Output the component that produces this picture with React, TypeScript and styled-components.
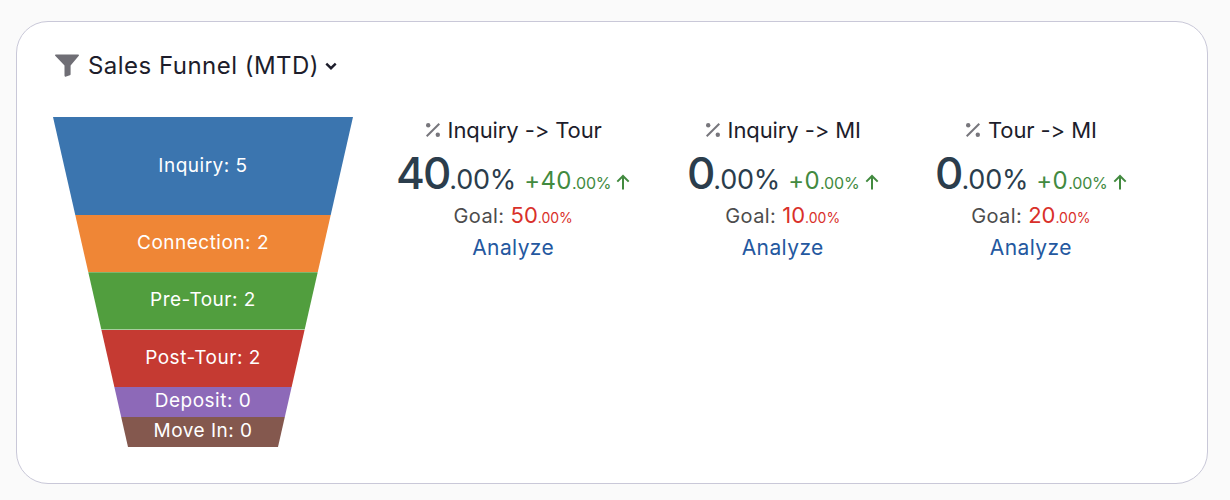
import React from "react";
import styled, { createGlobalStyle } from "styled-components";

const GlobalStyle = createGlobalStyle`
  html, body {
    margin: 0;
    padding: 0;
    background: #fafafa;
    font-family: "Inter", "Open Sans", sans-serif;
    font-variant-ligatures: none;
    font-feature-settings: "calt" 0, "liga" 0;
  }
`;

const FUNNEL_WIDTH = 300;
const FUNNEL_HEIGHT = 330;
const BOTTOM_WIDTH = 150;

const stages = [
  { label: "Inquiry: 5", height: 98, color: "#3b75af" },
  { label: "Connection: 2", height: 57.3, color: "#ef8636" },
  { label: "Pre-Tour: 2", height: 57.3, color: "#519e3e" },
  { label: "Post-Tour: 2", height: 57.4, color: "#c53a32" },
  { label: "Deposit: 0", height: 30, color: "#8d69b8" },
  { label: "Move In: 0", height: 30, color: "#84584e" },
];

const metrics = [
  { title: "Inquiry -> Tour", value: "40", delta: "+40", goal: "50" },
  { title: "Inquiry -> MI", value: "0", delta: "+0", goal: "10" },
  { title: "Tour -> MI", value: "0", delta: "+0", goal: "20" },
];

// inset of the funnel edge at a given distance from the top
const insetAt = (y: number) =>
  ((FUNNEL_WIDTH - BOTTOM_WIDTH) / 2) * (y / FUNNEL_HEIGHT);

function FilterIcon() {
  return (
    <TitleIcon viewBox="0 0 24 24" fill="#6f6e75">
      <path d="M0.8 1.5h22.4c.7 0 1 .8.6 1.3L15.6 12.6v8.6c0 .5-.3.9-.8 1.1l-3.6 1.3c-.8.3-1.7-.3-1.7-1.2v-9.8L.2 2.8c-.4-.5-.1-1.3.6-1.3z" />
    </TitleIcon>
  );
}

function ChevronIcon() {
  return (
    <Chevron viewBox="0 0 12 12" fill="none" stroke="#1d1d2b" strokeWidth="2.4">
      <path d="M1.3 3.6L6 8.2l4.7-4.6" />
    </Chevron>
  );
}

function PercentIcon() {
  return (
    <PercentSvg viewBox="0 0 16 16" fill="#77767c">
      <circle cx="3.2" cy="3.2" r="2.2" />
      <circle cx="12.8" cy="12.8" r="2.2" />
      <path d="M13.6 1l1.4 1.4L2.4 15 1 13.6z" />
    </PercentSvg>
  );
}

function ArrowUpIcon() {
  return (
    <ArrowSvg viewBox="0 0 14 16" fill="none" stroke="#428a3f" strokeWidth="2">
      <path d="M7 15.5V2M1.3 7.6L7 2l5.7 5.6" />
    </ArrowSvg>
  );
}

export default function App() {
  let offset = 0;

  return (
    <>
      <GlobalStyle />
      <Page>
        <Card>
          <Header>
            <FilterIcon />
            <Title>Sales Funnel (MTD)</Title>
            <ChevronIcon />
          </Header>
          <Body>
            <Funnel>
              {stages.map((stage) => {
                const top = insetAt(offset);
                const bottom = insetAt(offset + stage.height);
                offset += stage.height;
                return (
                  <Segment
                    key={stage.label}
                    $color={stage.color}
                    style={{
                      height: stage.height,
                      clipPath: `polygon(${top}px 0, ${FUNNEL_WIDTH - top}px 0, ${FUNNEL_WIDTH - bottom}px 100%, ${bottom}px 100%)`,
                    }}
                  >
                    {stage.label}
                  </Segment>
                );
              })}
            </Funnel>
            <Metrics>
              {metrics.map((metric) => (
                <Metric key={metric.title}>
                  <MetricTitle>
                    <PercentIcon />
                    {metric.title}
                  </MetricTitle>
                  <ValueRow>
                    <Value>
                      <ValueBig>{metric.value}</ValueBig>.00%
                    </Value>
                    <Delta>
                      <DeltaBig>{metric.delta}</DeltaBig>.00%
                      <ArrowUpIcon />
                    </Delta>
                  </ValueRow>
                  <Goal>
                    Goal:{" "}
                    <GoalValue>
                      <GoalBig>{metric.goal}</GoalBig>.00%
                    </GoalValue>
                  </Goal>
                  <AnalyzeLink>Analyze</AnalyzeLink>
                </Metric>
              ))}
            </Metrics>
          </Body>
        </Card>
      </Page>
    </>
  );
}

const Page = styled.div`
  width: 1230px;
  height: 500px;
  padding: 21px 22px 16px 16px;
  box-sizing: border-box;
`;

const Card = styled.div`
  height: 463px;
  box-sizing: border-box;
  padding: 28px 36px;
  background: #fff;
  border: 1px solid #c9c8d8;
  border-radius: 32px;
`;

const Header = styled.div`
  display: flex;
  align-items: center;
  height: 30px;
`;

const TitleIcon = styled.svg`
  width: 24px;
  height: 24px;
  margin-left: 2px;
  margin-right: 9px;
`;

const Title = styled.span`
  font-size: 24px;
  color: #1d1d2b;
  letter-spacing: 0.47px;
  white-space: nowrap;
`;

const Chevron = styled.svg`
  width: 12px;
  height: 12px;
  margin-left: 6px;
  margin-top: 2px;
`;

const Body = styled.div`
  display: flex;
  align-items: flex-start;
  margin-top: 37px;
`;

const Funnel = styled.div`
  display: flex;
  flex-direction: column;
  flex: none;
  width: ${FUNNEL_WIDTH}px;
`;

const Segment = styled.div<{ $color: string }>`
  display: flex;
  align-items: center;
  justify-content: center;
  padding-bottom: 2px;
  box-sizing: border-box;
  background: ${(p) => p.$color};
  color: #fff;
  font-size: 19px;
  letter-spacing: 0.5px;
  white-space: nowrap;
`;

const Metrics = styled.div`
  display: flex;
  gap: 56.5px;
  margin-left: 43px;
`;

const Metric = styled.div`
  display: flex;
  flex-direction: column;
  align-items: center;
`;

const MetricTitle = styled.div`
  display: flex;
  align-items: center;
  height: 26px;
  font-size: 22px;
  letter-spacing: -0.1px;
  color: #1d1d2b;
  white-space: nowrap;
`;

const PercentSvg = styled.svg`
  width: 16px;
  height: 16px;
  margin-right: 7px;
`;

const ValueRow = styled.div`
  display: flex;
  align-items: baseline;
  margin-top: 3px;
  white-space: nowrap;
`;

const Value = styled.span`
  font-size: 27px;
  letter-spacing: -0.2px;
  color: #2b3d4c;
`;

const ValueBig = styled.span`
  font-size: 44px;
  font-weight: 500;
  letter-spacing: -2px;
`;

const Delta = styled.span`
  margin-left: 8px;
  font-size: 16px;
  letter-spacing: -0.15px;
  color: #428a3f;
`;

const DeltaBig = styled.span`
  font-size: 24px;
  letter-spacing: 0.4px;
`;

const ArrowSvg = styled.svg`
  width: 14px;
  height: 16px;
  margin-left: 5px;
  vertical-align: -1px;
`;

const Goal = styled.div`
  margin-top: 2px;
  font-size: 20px;
  letter-spacing: 0.4px;
  line-height: 26px;
  color: #4c4c4c;
  white-space: nowrap;
`;

const GoalValue = styled.span`
  font-size: 14px;
  letter-spacing: 0;
  color: #d9302a;
`;

const GoalBig = styled.span`
  font-size: 22px;
`;

const AnalyzeLink = styled.a`
  margin-top: 4px;
  font-size: 21px;
  letter-spacing: 0.4px;
  line-height: 26px;
  color: #24589f;
  cursor: pointer;
`;
